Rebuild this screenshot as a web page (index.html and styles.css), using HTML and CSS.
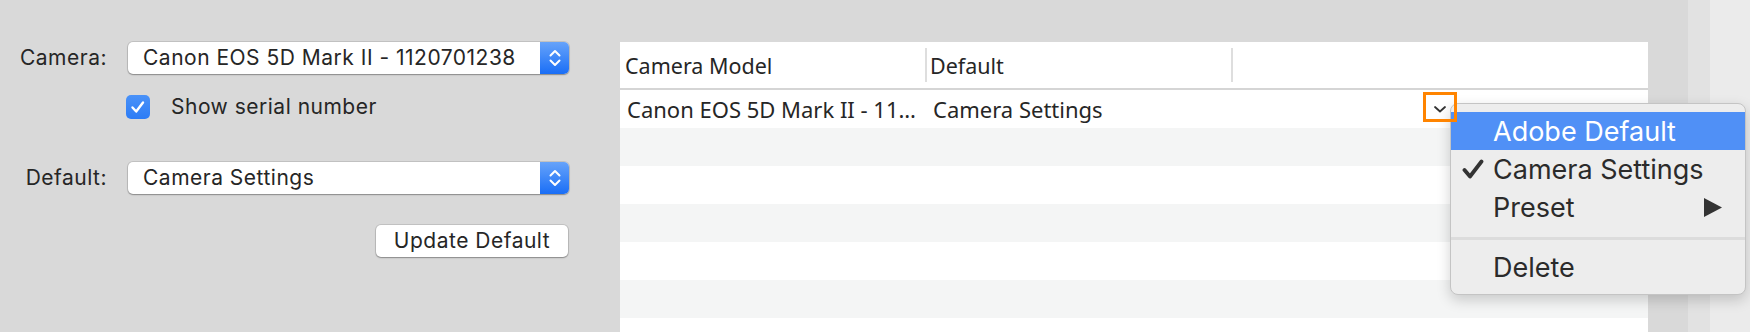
FILE: index.html
```html
<!DOCTYPE html>
<html lang="en">
<head>
  <meta charset="UTF-8">
  <meta name="viewport" content="width=device-width, initial-scale=1.0">
  <title>Raw Defaults</title>
  <link rel="stylesheet" href="styles.css">
</head>
<body>
  <div id="window">
    <div id="prefs">
      <div class="field">
        <span class="field-label">Camera:</span>
        <div class="popup">
          <span class="popup-value">Canon EOS 5D Mark II - 1120701238</span>
          <span class="stepper">
            <svg width="14" height="22" viewBox="0 0 14 22"><path d="M2.5 8.5 L7 4 L11.5 8.5 M2.5 13.5 L7 18 L11.5 13.5" fill="none" stroke="#fff" stroke-width="2" stroke-linecap="round" stroke-linejoin="round"/></svg>
          </span>
        </div>
      </div>
      <div class="field field-check">
        <span></span>
        <label class="check">
          <span class="check-box">
            <svg width="24" height="24" viewBox="0 0 24 24"><path d="M6.5 12.5 L10.2 16.5 L17 7.5" fill="none" stroke="#fff" stroke-width="2.4" stroke-linecap="round" stroke-linejoin="round"/></svg>
          </span>
          Show serial number
        </label>
      </div>
      <div class="field field-default">
        <span class="field-label">Default:</span>
        <div class="popup">
          <span class="popup-value">Camera Settings</span>
          <span class="stepper">
            <svg width="14" height="22" viewBox="0 0 14 22"><path d="M2.5 8.5 L7 4 L11.5 8.5 M2.5 13.5 L7 18 L11.5 13.5" fill="none" stroke="#fff" stroke-width="2" stroke-linecap="round" stroke-linejoin="round"/></svg>
          </span>
        </div>
      </div>
      <div class="field field-button">
        <span></span>
        <button class="btn">Update Default</button>
      </div>
    </div>

    <div id="defaults-table">
      <div class="table-head">
        <div class="th">Camera Model</div>
        <div class="th">Default</div>
        <div class="th"></div>
      </div>
      <div class="table-body">
        <div class="tr">
          <div class="td">Canon EOS 5D Mark II - 11…</div>
          <div class="td">Camera Settings</div>
          <div class="td">
            <span class="row-menu">
              <svg width="14" height="10" viewBox="0 0 14 10"><path d="M2 3 L7 7.5 L12 3" fill="none" stroke="#333" stroke-width="1.8" stroke-linecap="round" stroke-linejoin="round"/></svg>
            </span>
          </div>
        </div>
        <div class="tr"></div>
        <div class="tr"></div>
        <div class="tr"></div>
        <div class="tr"></div>
        <div class="tr"></div>
        <div class="tr"></div>
      </div>
    </div>

    <div class="gutter"></div>
    <div class="scroll-track"></div>
    <div class="edge"></div>
  </div>

  <div id="context-menu">
    <div class="menu-item selected">Adobe Default</div>
    <div class="menu-item">
      <span class="menu-check">
        <svg width="22" height="20" viewBox="0 0 22 20"><path d="M2.5 11 L8 17.5 L19.5 2.5" fill="none" stroke="#333" stroke-width="3.8" stroke-linecap="round" stroke-linejoin="round"/></svg>
      </span>
      Camera Settings
    </div>
    <div class="menu-item">
      Preset
      <svg class="submenu-arrow" width="18" height="19" viewBox="0 0 18 19"><path d="M0 0 L18 9.5 L0 19 Z" fill="#333"/></svg>
    </div>
    <div class="menu-sep"></div>
    <div class="menu-item">Delete</div>
  </div>
</body>
</html>
```
FILE: styles.css
```css
body {
  margin: 0;
  background: #d9d9d9;
  font-family: Inter, "Liberation Sans", sans-serif;
  color: #262626;
  overflow: hidden;
}
#window {
  display: flex;
  height: 332px;
  overflow: hidden;
}

/* left form */
#prefs {
  flex: none;
  width: 620px;
  padding-top: 42px;
  box-sizing: border-box;
  font-size: 21px;
  line-height: 24px;
  letter-spacing: 0.5px;
}
.field {
  display: grid;
  grid-template-columns: 105px 441px;
  column-gap: 23px;
  align-items: center;
}
.field-label {
  text-align: right;
  margin-right: -2px;
}
.field-check {
  margin-top: 21px;
}
.field-default {
  margin-top: 43px;
}
.field-button {
  margin-top: 31px;
}
.popup {
  display: flex;
  align-items: center;
  height: 32px;
  background: #fff;
  border-radius: 5px;
  box-shadow: 0 0 0 1px rgba(0, 0, 0, 0.1), 0 1px 1.5px rgba(0, 0, 0, 0.3);
  overflow: hidden;
}
.popup-value {
  flex: 1;
  padding-left: 15px;
  white-space: nowrap;
}
.stepper {
  align-self: stretch;
  width: 29px;
  display: flex;
  align-items: center;
  justify-content: center;
  background: linear-gradient(#66a3fa, #1a6ef6);
}
.check {
  display: flex;
  align-items: center;
  gap: 21px;
  margin-left: -2px;
}
.check-box {
  display: flex;
  width: 24px;
  height: 24px;
  border-radius: 5px;
  background: linear-gradient(#4a92f8, #2c7cf6);
}
.btn {
  justify-self: end;
  width: 192px;
  height: 32px;
  margin-right: 1px;
  background: #fff;
  border: none;
  border-radius: 5px;
  box-shadow: 0 0 0 1px rgba(0, 0, 0, 0.1), 0 1px 1.5px rgba(0, 0, 0, 0.3);
  font: inherit;
  color: inherit;
  letter-spacing: inherit;
  padding: 0;
}

/* table */
#defaults-table {
  flex: none;
  width: 1028px;
  margin-top: 42px;
  background: #fff;
  font-family: "Noto Sans", sans-serif;
  color: #262626;
}
.table-head,
.tr {
  display: grid;
  grid-template-columns: 305px 306px 1fr;
}
.table-head {
  height: 46px;
  border-bottom: 2px solid #d5d5d5;
  font-size: 21.5px;
}
.th {
  display: flex;
  align-items: center;
  padding-left: 5px;
}
.th + .th {
  background: linear-gradient(#dedede, #dedede) left center / 2px 34px no-repeat;
}
.tr {
  height: 38px;
  font-size: 22px;
}
.tr:nth-child(even) {
  background: #f4f5f5;
}
.td {
  display: flex;
  align-items: center;
  padding-left: 7px;
  white-space: nowrap;
}
.td + .td {
  padding-left: 8px;
}
.row-menu {
  position: relative;
  z-index: 3;
  align-self: flex-start;
  display: flex;
  align-items: center;
  justify-content: center;
  width: 34px;
  height: 30px;
  box-sizing: border-box;
  margin: 2px 0 0 184px;
  padding-top: 3px;
  border: 3px solid #ff8400;
}

/* window edge */
.gutter {
  flex: none;
  width: 40px;
}
.scroll-track {
  flex: none;
  width: 22px;
  background: #e2e2e2;
}
.edge {
  flex: 1;
  background: #ebebeb;
}

/* context menu */
#context-menu {
  position: absolute;
  left: 1450px;
  top: 103px;
  width: 296px;
  box-sizing: border-box;
  padding: 8px 0;
  background: #ededed;
  border: 1px solid #c4c4c4;
  border-radius: 8px;
  box-shadow: 0 5px 14px rgba(0, 0, 0, 0.18);
  font-size: 27px;
  color: #2b2b2b;
  z-index: 2;
}
.menu-item {
  position: relative;
  display: flex;
  align-items: center;
  height: 38px;
  padding-left: 42px;
}
.menu-item.selected {
  background: #5090f6;
  color: #fff;
}
.menu-check {
  position: absolute;
  left: 11px;
  top: 9px;
  display: flex;
}
.submenu-arrow {
  margin-left: auto;
  margin-right: 23px;
}
.menu-sep {
  height: 3px;
  margin: 11px 0 8px;
  background: #dcdcdc;
}
```
